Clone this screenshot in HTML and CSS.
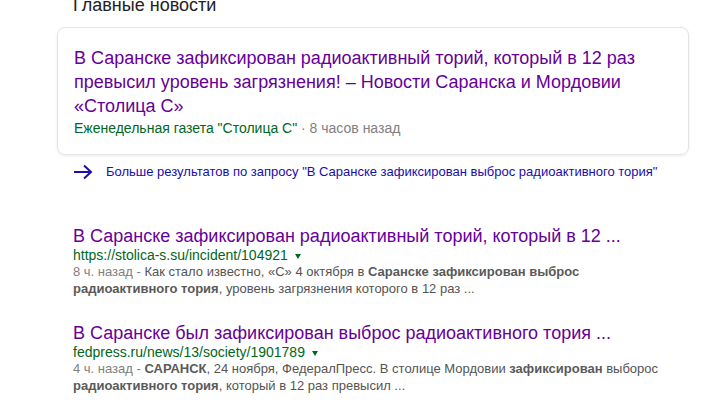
FILE: index.html
```html
<!DOCTYPE html>
<html lang="ru">
<head>
<meta charset="utf-8">
<title>Главные новости</title>
<link rel="stylesheet" href="styles.css">
</head>
<body>
<div class="page">
  <h2 class="section-title">Главные новости</h2>
  <div class="card">
    <a class="card-title" href="#">В Саранске зафиксирован радиоактивный торий, который в 12 раз превысил уровень загрязнения! – Новости Саранска и Мордовии «Столица С»</a>
    <div class="card-source"><span class="source-name">Еженедельная газета "Столица С"</span><span class="source-time"> · 8 часов назад</span></div>
  </div>
  <a class="more" href="#">
    <svg class="more-arrow" width="20" height="16" viewBox="0 0 20 16"><path d="M1 8 H18 M11 1.5 L18 8 L11 14.5" fill="none" stroke="#1a0dab" stroke-width="2"/></svg>
    <span class="more-text">Больше результатов по запросу "В Саранске зафиксирован выброс радиоактивного тория"</span>
  </a>
  <div class="results">
    <div class="result">
      <a class="result-title" href="#">В Саранске зафиксирован радиоактивный торий, который в 12 ...</a>
      <div class="result-url">https://stolica-s.su/incident/104921<span class="caret"></span></div>
      <div class="snippet"><span class="date">8 ч. назад - </span>Как стало известно, «С» 4 октября в <b>Саранске зафиксирован выброс радиоактивного тория</b>, уровень загрязнения которого в 12 раз ...</div>
    </div>
    <div class="result">
      <a class="result-title" href="#">В Саранске был зафиксирован выброс радиоактивного тория ...</a>
      <div class="result-url">fedpress.ru/news/13/society/1901789<span class="caret"></span></div>
      <div class="snippet"><span class="date">4 ч. назад - </span><b>САРАНСК</b>, 24 ноября, ФедералПресс. В столице Мордовии <b>зафиксирован</b> выборос <b>радиоактивного тория</b>, который в 12 раз превысил ...</div>
    </div>
  </div>
</div>
</body>
</html>
```

FILE: styles.css
```css
html, body {
  margin: 0;
  padding: 0;
  background: #fff;
}
body {
  font-family: "Liberation Sans", Arial, sans-serif;
  color: #222;
  overflow: hidden;
}
a {
  text-decoration: none;
}
.page {
  padding-left: 57px;
  width: 632px;
}
.section-title {
  margin: -7px 0 0 16px;
  font-size: 18px;
  line-height: 24px;
  font-weight: normal;
  color: #222;
}
.card {
  margin-top: 10px;
  border: 1px solid #e4e4e4;
  border-radius: 8px;
  box-shadow: 0 1px 3px rgba(0, 0, 0, 0.08);
  padding: 18px 16px 16px 16px;
}
.card-title {
  display: block;
  font-size: 18px;
  line-height: 24px;
  color: #660099;
}
.card-source {
  font-size: 14px;
  line-height: 20px;
}
.source-name {
  color: #006621;
}
.source-time {
  color: #808080;
}
.more {
  display: flex;
  align-items: center;
  gap: 13px;
  margin: 6px 0 0 16px;
  height: 22px;
}
.more-arrow {
  display: block;
  flex: none;
}
.more-text {
  font-size: 13px;
  line-height: 20px;
  color: #1a0dab;
}
.results {
  margin: 42px 0 0 16px;
  display: flex;
  flex-direction: column;
  gap: 25px;
}
.result-title {
  display: block;
  font-size: 18px;
  line-height: 22px;
  color: #660099;
}
.result-url {
  font-size: 14px;
  line-height: 16px;
  color: #006621;
}
.caret {
  display: inline-block;
  margin-left: 7px;
  vertical-align: middle;
  border-top: 5px solid #006621;
  border-left: 3.5px solid transparent;
  border-right: 3.5px solid transparent;
}
.snippet {
  max-width: 600px;
  font-size: 13px;
  line-height: 17px;
  color: #545454;
}
.snippet b {
  color: #5a5a5a;
}
.date {
  color: #808080;
}
```
